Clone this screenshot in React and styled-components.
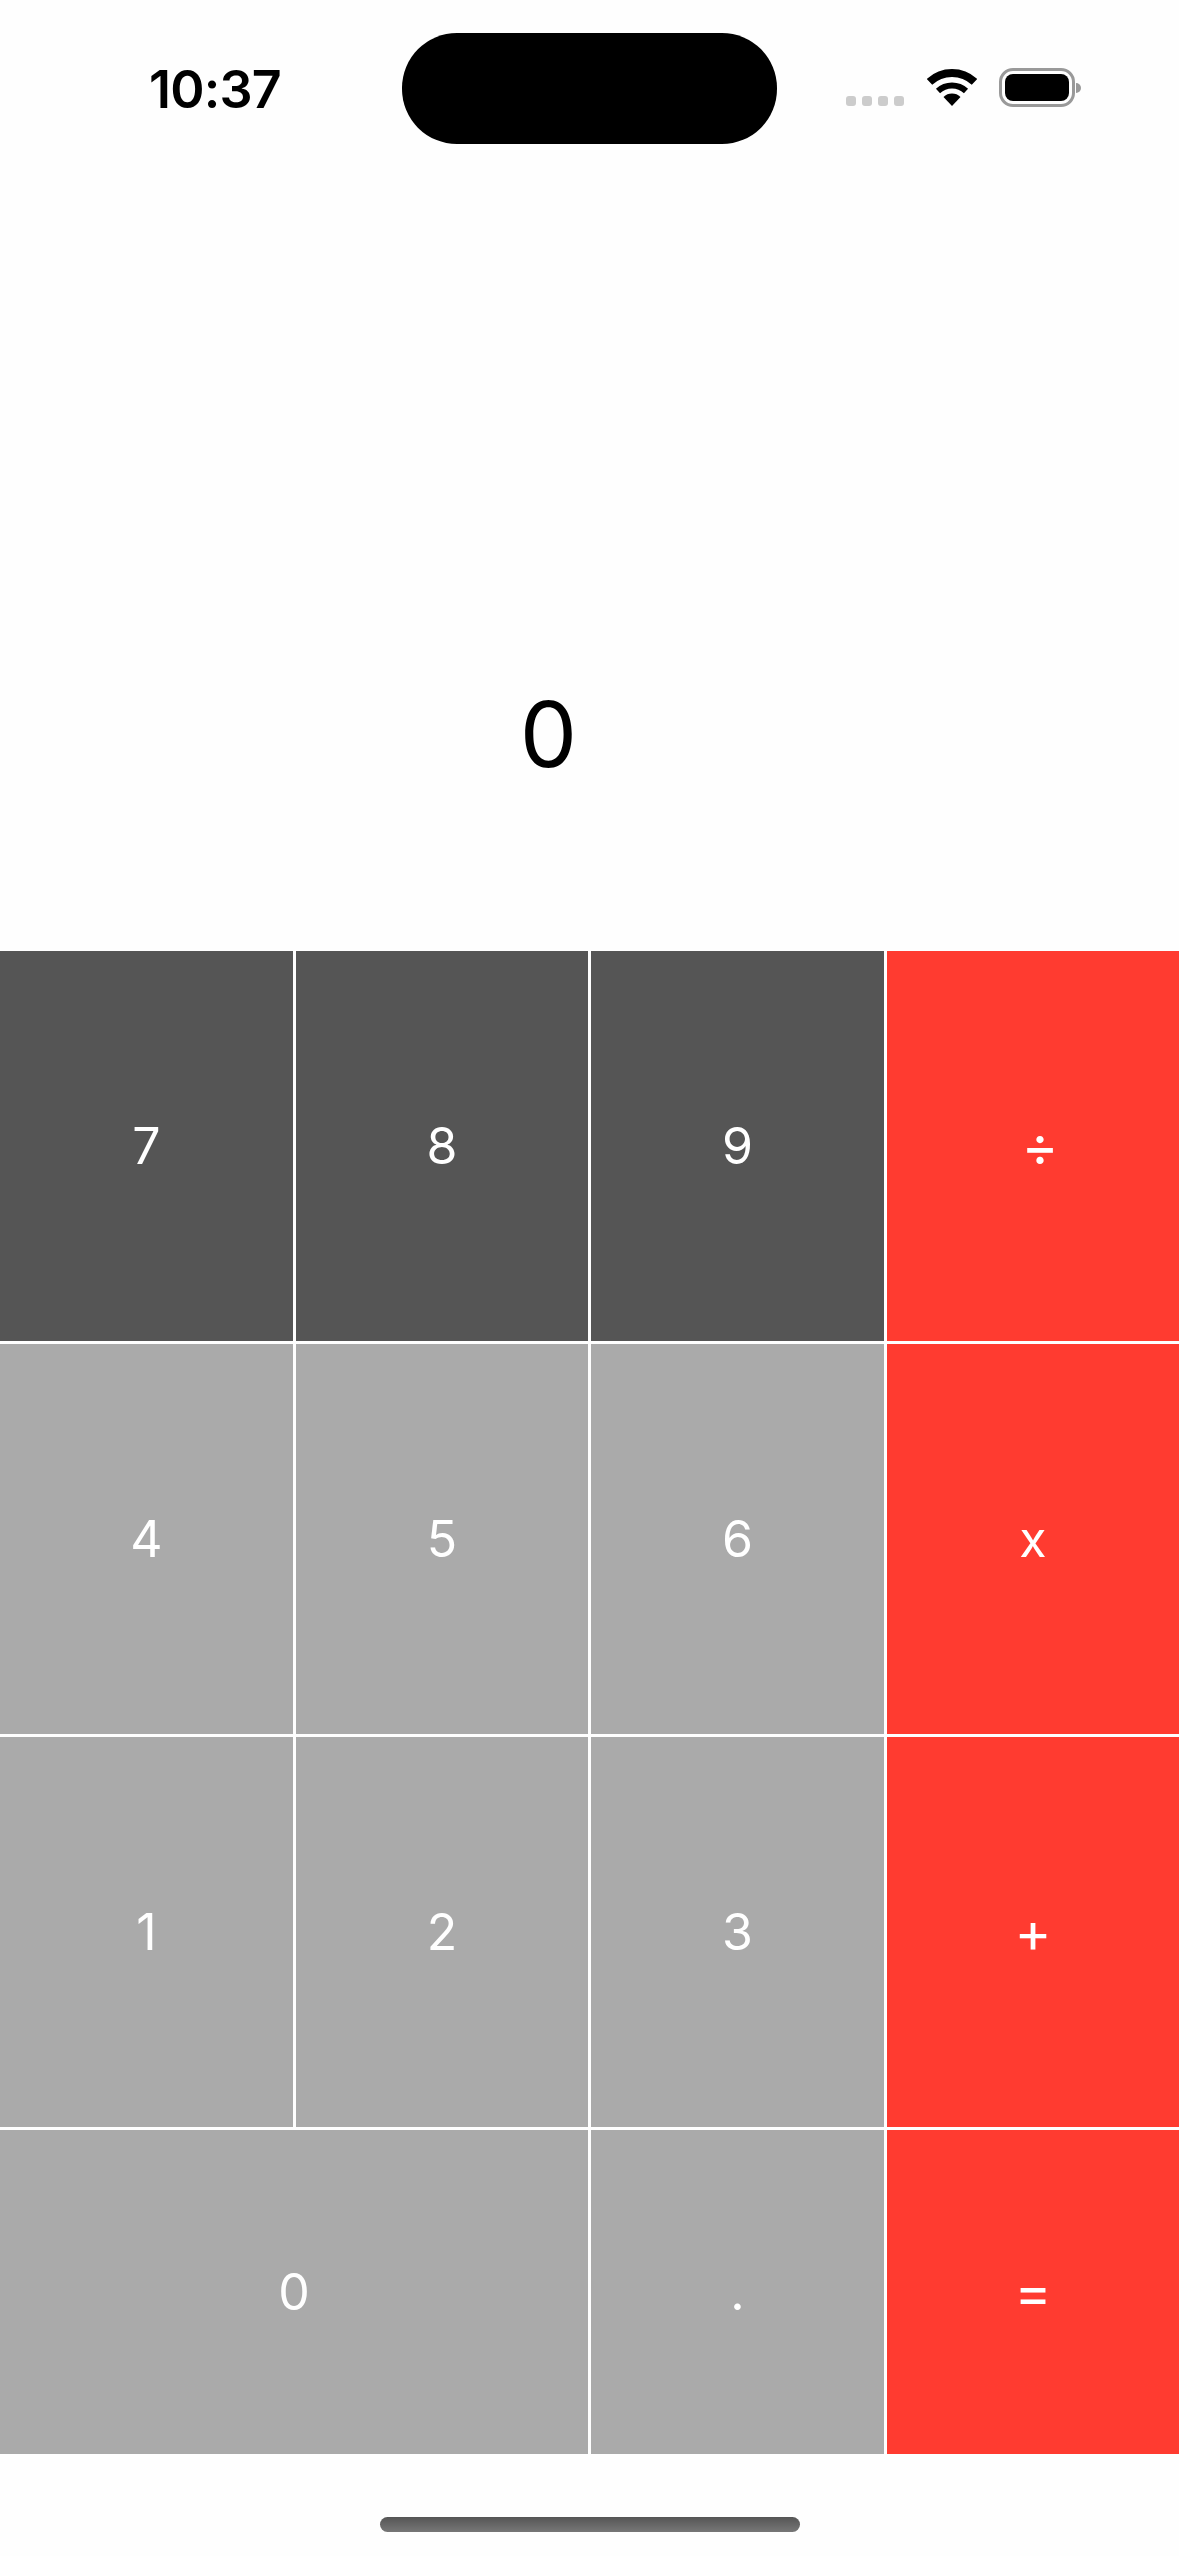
import React from "react";
import styled, { createGlobalStyle } from "styled-components";

const Global = createGlobalStyle`
  html, body { margin: 0; padding: 0; background: #fefefe; }
  #root { width: 1179px; height: 2556px; }
`;

const Screen = styled.div`
  width: 1179px;
  height: 2556px;
  display: flex;
  flex-direction: column;
  background: #fefefe;
  font-family: Inter, "Liberation Sans", sans-serif;
  overflow: hidden;
`;

const StatusBar = styled.header`
  height: 111px;
  padding-top: 33px;
  display: flex;
  flex: none;
`;

const Time = styled.div`
  flex: none;
  width: 253px;
  padding: 27px 0 0 149px;
  font-size: 52px;
  font-weight: 600;
  letter-spacing: -0.8px;
  color: #000;
  line-height: 1.15;
`;

const Island = styled.div`
  width: 375px;
  height: 111px;
  background: #000;
  border-radius: 55px;
  flex: none;
`;

const Indicators = styled.div`
  padding-left: 69px;
  padding-top: 36px;
  display: flex;
  align-items: flex-start;
`;

const Signal = styled.div`
  display: flex;
  gap: 6px;
  margin-top: 27px;
  margin-right: 23px;
`;

const SignalDot = styled.span`
  width: 10px;
  height: 10px;
  border-radius: 3px;
  background: #cccccc;
`;

const Battery = styled.div`
  width: 76px;
  height: 39px;
  box-sizing: border-box;
  border: 3px solid #999999;
  border-radius: 14px;
  padding: 3px;
  margin: -1px 0 0 22px;
  position: relative;
`;

const BatteryFill = styled.div`
  width: 100%;
  height: 100%;
  background: #000;
  border-radius: 8px;
`;

const BatteryNub = styled.span`
  position: absolute;
  right: -9px;
  top: 12px;
  width: 5px;
  height: 10px;
  background: #999999;
  border-radius: 0 5px 5px 0;
`;

const Display = styled.section`
  height: 807px;
  flex: none;
  box-sizing: border-box;
  padding: 535px 82px 0 0;
  display: flex;
  justify-content: center;
  align-items: flex-start;
  font-size: 91px;
  line-height: 110px;
  font-weight: 400;
  color: #000;
`;

const Keypad = styled.section`
  display: grid;
  grid-template-columns: 293px 292px 293px 292px;
  grid-template-rows: 390px 390px 390px 324px;
  gap: 3px;
  flex: none;
`;

const tones = { dark: "#555555", light: "#aaaaaa", op: "#ff3b30" };

const Key = styled.div`
  grid-column: span ${(p) => p.$span || 1};
  background: ${(p) => tones[p.$tone]};
  color: #fff;
  font-size: ${(p) => p.$size || 50}px;
  font-weight: 400;
  line-height: 1;
  box-sizing: border-box;
  padding-left: ${(p) => p.$inset || 0}px;
  display: flex;
  align-items: center;
  justify-content: center;
`;

const HomeArea = styled.footer`
  flex: 1;
  display: flex;
  justify-content: center;
  padding-top: 63px;
`;

const HomeBar = styled.div`
  width: 420px;
  height: 15px;
  border-radius: 8px;
  background: linear-gradient(#555555, #777777);
`;

const keys = [
  { label: "7", tone: "dark" },
  { label: "8", tone: "dark" },
  { label: "9", tone: "dark" },
  { label: "÷", tone: "op", size: 56, inset: 14 },
  { label: "4", tone: "light" },
  { label: "5", tone: "light" },
  { label: "6", tone: "light" },
  { label: "x", tone: "op" },
  { label: "1", tone: "light" },
  { label: "2", tone: "light" },
  { label: "3", tone: "light" },
  { label: "+", tone: "op", size: 56 },
  { label: "0", tone: "light", span: 2 },
  { label: ".", tone: "light" },
  { label: "=", tone: "op", size: 56 },
];

export default function App() {
  return (
    <Screen>
      <Global />
      <StatusBar>
        <Time>10:37</Time>
        <Island />
        <Indicators>
          <Signal>
            <SignalDot /><SignalDot /><SignalDot /><SignalDot />
          </Signal>
          <svg width="50" height="37" viewBox="0 0 50 37" aria-hidden="true">
            <path d="M2.5 12.9A33 33 0 0 1 47.5 12.9" fill="none" stroke="#000" strokeWidth="8" />
            <path d="M11 22A20.5 20.5 0 0 1 39 22" fill="none" stroke="#000" strokeWidth="6" />
            <path d="M25 37L16.5 27.9A12.5 12.5 0 0 1 33.5 27.9Z" fill="#000" />
          </svg>
          <Battery>
            <BatteryFill />
            <BatteryNub />
          </Battery>
        </Indicators>
      </StatusBar>
      <Display>0</Display>
      <Keypad>
        {keys.map((k) => (
          <Key key={k.label} $tone={k.tone} $span={k.span} $size={k.size} $inset={k.inset}>
            {k.label}
          </Key>
        ))}
      </Keypad>
      <HomeArea>
        <HomeBar />
      </HomeArea>
    </Screen>
  );
}
